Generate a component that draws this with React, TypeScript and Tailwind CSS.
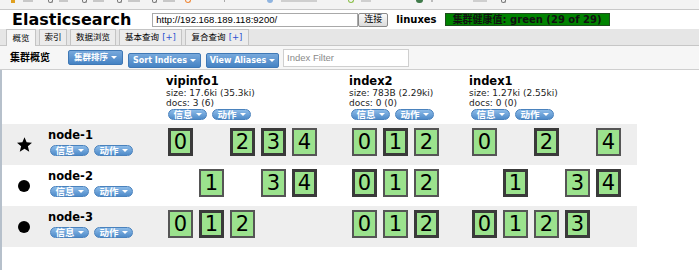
import React from "react";

type Slot = "p" | "r" | null;

const nodes: { name: string; icon: "star" | "dot"; cells: Slot[][] }[] = [
  {
    name: "node-1",
    icon: "star",
    cells: [
      ["p", null, "p", "p", "r"],
      ["r", "p", "r"],
      ["r", null, "p", null, "r"],
    ],
  },
  {
    name: "node-2",
    icon: "dot",
    cells: [
      [null, "r", null, "r", "p"],
      ["p", "r", "r"],
      [null, "p", null, "r", "p"],
    ],
  },
  {
    name: "node-3",
    icon: "dot",
    cells: [
      ["r", "p", "r", null, null],
      ["r", "r", "p"],
      ["p", "r", "r", "p", null],
    ],
  },
];

const indices = [
  { name: "vipinfo1", size: "size: 17.6ki (35.3ki)", docs: "docs: 3 (6)", width: "w-[183px]", pad: "pl-[2px]" },
  { name: "index2", size: "size: 783B (2.29ki)", docs: "docs: 0 (0)", width: "w-[120px]", pad: "pl-[3px]" },
  { name: "index1", size: "size: 1.27ki (2.55ki)", docs: "docs: 0 (0)", width: "w-[168px]", pad: "pl-[3px]" },
];

function Caret() {
  return <span className="ml-[3px] inline-block h-0 w-0 border-x-[3px] border-t-[3px] border-x-transparent border-t-white" />;
}

function Pill({ label }: { label: string }) {
  return (
    <span className="inline-flex h-[11px] w-[39px] items-center justify-center rounded-full border border-[#4a82bd] bg-gradient-to-b from-[#8cbbe8] to-[#4f8bc9] text-[9.5px] font-bold leading-none text-white">
      {label}
      <Caret />
    </span>
  );
}

function ToolButton({ label, w, cjk }: { label: string; w: string; cjk?: boolean }) {
  return (
    <span
      className={`inline-flex h-[15px] ${w} items-center justify-center rounded-[2px] border border-[#3f78b5] bg-gradient-to-b from-[#78a9dc] to-[#4583c4] font-bold leading-none text-white ${cjk ? "text-[8.5px]" : "text-[8px]"}`}
    >
      {label}
      <Caret />
    </span>
  );
}

function Shard({ n, kind }: { n: number; kind: Slot }) {
  if (!kind) return <div className="h-[28px] w-[25px]" />;
  return (
    <div
      className={`flex h-[28px] w-[25px] items-center justify-center bg-[#9be28d] text-[21px] leading-none text-black ${
        kind === "p" ? "border-[3px] border-[#3a3a3a]" : "border-2 border-[#555555]"
      }`}
    >
      {n}
    </div>
  );
}

function Star() {
  return (
    <svg width="15" height="15" viewBox="0 0 24 23">
      <polygon points="12,0 15.4,8 24,8.5 17.4,14.2 19.6,23 12,18.2 4.4,23 6.6,14.2 0,8.5 8.6,8" fill="#000" />
    </svg>
  );
}

export default function App() {
  return (
    <div className="h-[270px] w-[699px] overflow-hidden bg-white font-['DejaVu_Sans','Noto_Sans_CJK_SC',sans-serif] text-black">
      {/* browser bookmark bar, cut off at the top */}
      <div className="flex h-[10px] items-start border-b border-[#c9c9c9] bg-[#f3f3f3] pl-[11px]">
        <span className="h-[3px] w-[4px] bg-[#e0a020]" />
        <span className="ml-[8px] h-[2px] w-[10px] bg-[#c8c8c8]" />
        <span className="ml-[15px] h-[3px] w-[5px] rounded-b-full border border-t-0 border-[#777]" />
        <span className="ml-[6px] h-[2px] w-[9px] bg-[#c8c8c8]" />
        <span className="ml-[14px] h-[3px] w-[5px] rounded-b-full border border-t-0 border-[#777]" />
        <span className="ml-[6px] h-[2px] w-[11px] bg-[#c8c8c8]" />
        <span className="ml-[13px] h-[3px] w-[5px] rounded-b-full border border-t-0 border-[#777]" />
        <span className="ml-[6px] h-[2px] w-[12px] bg-[#c8c8c8]" />
        <span className="ml-[12px] h-[3px] w-[5px] rounded-b-full border border-t-0 border-[#777]" />
        <span className="ml-[6px] h-[2px] w-[12px] bg-[#c8c8c8]" />
        <span className="ml-[10px] h-[3px] w-[6px] rounded-b-full border border-t-0 border-[#f08a3a]" />
        <span className="ml-[33px] h-[2px] w-[1px] bg-[#aaa]" />
        <span className="ml-[42px] h-[3px] w-[6px] rounded-b-full bg-[#8fb4e0]" />
        <span className="ml-[8px] h-[2px] w-[36px] bg-[#cfcfcf]" />
        <span className="ml-[31px] h-[3px] w-[6px] rounded-b-full border border-t-0 border-[#8cc04a]" />
        <span className="ml-[7px] h-[2px] w-[10px] bg-[#cfcfcf]" />
        <span className="ml-[45px] h-[3px] w-[7px] rounded-b-full bg-[#3f7a4a]" />
        <span className="ml-[8px] h-[2px] w-[2px] bg-[#bbb]" />
        <span className="ml-[40px] h-[2px] w-[14px] bg-[#cfcfcf]" />
        <span className="ml-[14px] h-[3px] w-[5px] rounded-b-full border border-t-0 border-[#777]" />
      </div>

      {/* header */}
      <div className="flex h-[19px] items-center pl-[12px]">
        <span className="text-[16px] font-bold leading-none">Elasticsearch</span>
        <div className="ml-[21px] flex h-[14px] w-[206px] items-center border border-[#a9a9a9] bg-white pl-[3px] font-['Liberation_Sans',sans-serif] text-[9.5px] leading-none">
          http://192.168.189.118:9200/
        </div>
        <span className="flex h-[14px] w-[30px] items-center justify-center rounded-[2px] border border-[#8a8a8a] bg-gradient-to-b from-[#fafafa] to-[#dcdcdc] text-[9px] leading-none">
          连接
        </span>
        <span className="ml-[8px] text-[10px] font-bold leading-none">linuxes</span>
        <span className="ml-[8px] flex h-[13px] w-[165px] items-center justify-center border border-[#1d4d1d] bg-[#008300] text-[10px] font-bold leading-none text-[#111]">
          集群健康值: green (29 of 29)
        </span>
      </div>

      {/* tabs */}
      <div className="flex h-[17px] items-end gap-[3px] border-b border-[#c6c6c6] bg-[#e6e6e6] pl-[6px]">
        {[
          { t: "概览", w: "w-[30px]", active: true },
          { t: "索引", w: "w-[28px]" },
          { t: "数据浏览", w: "w-[46px]" },
          { t: "基本查询", w: "w-[63px]", plus: true },
          { t: "复合查询", w: "w-[64px]", plus: true },
        ].map((tab) => (
          <span
            key={tab.t}
            className={`flex h-[16px] ${tab.w} items-center justify-center border border-b-0 border-[#c4c4c4] text-[8.5px] leading-none ${
              tab.active ? "-mb-px h-[17px] bg-[#f6f6f6]" : "bg-[#ececec]"
            }`}
          >
            {tab.t}
            {tab.plus ? <span className="ml-[3px] text-[#2a4fd0]">[+]</span> : null}
          </span>
        ))}
      </div>

      {/* toolbar */}
      <div className="flex h-[24px] items-center border-b border-[#cfcfcf] bg-[#f6f6f6] pl-[10px]">
        <span className="w-[58px] text-[10px] font-bold leading-none">集群概览</span>
        <ToolButton label="集群排序" w="w-[55px]" cjk />
        <span className="ml-[5px]">
          <ToolButton label="Sort Indices" w="w-[73px]" />
        </span>
        <span className="ml-[5px]">
          <ToolButton label="View Aliases" w="w-[73px]" />
        </span>
        <div className="ml-[4px] flex h-[18px] w-[126px] items-center border border-[#cfcfcf] bg-white pl-[3px] font-['Liberation_Sans',sans-serif] text-[9.5px] leading-none text-[#8a8a8a]">
          Index Filter
        </div>
      </div>

      {/* cluster overview */}
      <div className="border-l-2 border-[#b6c0cb]">
        <div className="flex">
          <div className="w-[164px]" />
          {indices.map((ix) => (
            <div key={ix.name} className={`${ix.width} pt-[4px] pb-[4px]`}>
              <div className="text-[11.5px] font-bold leading-[14px]">{ix.name}</div>
              <div className="text-[9px] leading-[10px] text-[#222]">{ix.size}</div>
              <div className="text-[9px] leading-[10px] text-[#222]">{ix.docs}</div>
              <div className="mt-[1px] flex gap-[5px] pl-[2px]">
                <Pill label="信息" />
                <Pill label="动作" />
              </div>
            </div>
          ))}
        </div>

        {nodes.map((node, i) => (
          <div key={node.name} className={`flex h-[41px] w-[635px] ${i % 2 === 0 ? "bg-[#eeeeee]" : "bg-white"}`}>
            <div className="flex w-[44px] items-center justify-center">
              {node.icon === "star" ? <Star /> : <span className="h-[12px] w-[12px] rounded-full bg-black" />}
            </div>
            <div className="w-[120px] pt-[4px] pl-[2px]">
              <div className="text-[11.5px] font-bold leading-[14px]">{node.name}</div>
              <div className="mt-[3px] flex gap-[5px] pl-[2px]">
                <Pill label="信息" />
                <Pill label="动作" />
              </div>
            </div>
            {indices.map((ix, c) => (
              <div key={ix.name} className={`${ix.width} ${ix.pad} flex gap-[6px] pt-[4px]`}>
                {node.cells[c].map((kind, n) => (
                  <Shard key={n} n={n} kind={kind} />
                ))}
              </div>
            ))}
          </div>
        ))}
        <div className="h-[30px]" />
      </div>
    </div>
  );
}
